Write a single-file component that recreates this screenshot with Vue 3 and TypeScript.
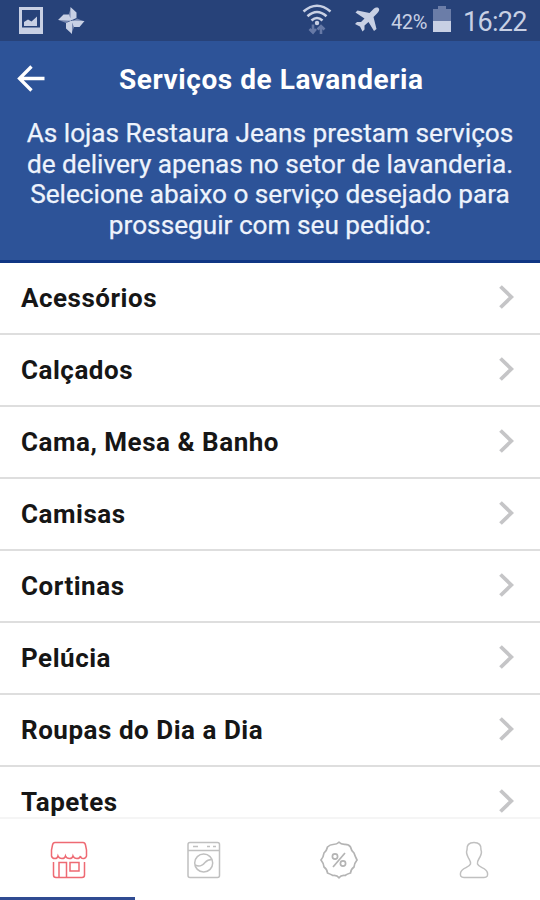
<script setup lang="ts">
interface Service {
  name: string
}

const intro: string[] = [
  'As lojas Restaura Jeans prestam serviços',
  'de delivery apenas no setor de lavanderia.',
  'Selecione abaixo o serviço desejado para',
  'prosseguir com seu pedido:',
]

const services: Service[] = [
  { name: 'Acessórios' },
  { name: 'Calçados' },
  { name: 'Cama, Mesa & Banho' },
  { name: 'Camisas' },
  { name: 'Cortinas' },
  { name: 'Pelúcia' },
  { name: 'Roupas do Dia a Dia' },
  { name: 'Tapetes' },
]
</script>

<template>
  <div class="screen">
    <div class="status">
      <svg class="photo" width="24" height="27" viewBox="0 0 24 27">
        <path fill-rule="evenodd" d="M0 0H24V27H0ZM3 3V20.500H21V3Z" />
        <path d="M5 19V15L9 12.500L12.500 14.500L18 9.500V19Z" />
      </svg>
      <svg class="pinwheel" width="27" height="27" viewBox="0 0 27 27">
        <path class="halo" d="M13 0.500V12.500L10.500 8ZM26.500 14.500H14.500L19 11.500ZM13.500 26.500V14.500L16.500 19ZM0.500 13H12.500L8 16Z" />
        <path d="M12.500 0L18.500 5.500V11L14 13H12.500ZM26.500 14L21.500 20H16L13.500 14.500V13.500ZM14 27L8 21.500V16L12.500 14H14ZM0 13L5.500 7.500H11L13 12.500V13.800Z" />
      </svg>
      <span class="gap"></span>
      <svg class="wifi" width="30" height="31" viewBox="0 0 30 31">
        <g class="arcs">
          <path d="M1.500 7.500Q15-4 28.500 7.500" />
          <path d="M5.500 12.200Q15 3.800 24.500 12.200" />
          <path d="M9.500 16.500Q15 11.500 20.500 16.500" />
        </g>
        <circle cx="15" cy="19" r="2.200" />
        <path class="traffic" d="M11 20.500V28M7.500 25L11 28.500L14 25M19 30V22M15.500 25.500L19 22L22.500 25.500" />
      </svg>
      <svg class="plane" width="25" height="25" viewBox="0 0 25 25">
        <path d="M23.500 1C25 2.500 24 4.500 22 6.500L18.500 10L21.500 22L19 24L13.500 15L9.500 18.500V22.500L7.500 24.500L5 19.500L0 17L2 15H6L9.500 11.500L0.500 5.500L2.500 3.500L14.500 6L18 2.500C20 0.500 22 0 23.500 1Z" />
      </svg>
      <span class="percent">42%</span>
      <svg class="battery" width="18" height="26" viewBox="0 0 18 26">
        <path class="empty" d="M5 0H13V3H18V15H0V3H5Z" />
        <path d="M0 15H18V26H0Z" />
      </svg>
      <span class="clock">16:22</span>
    </div>

    <header class="header">
      <div class="bar">
        <svg class="back" width="28" height="28" viewBox="0 0 28 28">
          <path d="M14.500 1.500L2.500 13.500L14.500 25.500M2.500 13.500H27.500" />
        </svg>
        <h1>Serviços de Lavanderia</h1>
      </div>
      <p class="intro">
        <span v-for="line in intro" :key="line">{{ line }}</span>
      </p>
    </header>

    <main class="list">
      <div v-for="service in services" :key="service.name" class="row">
        <span>{{ service.name }}</span>
        <svg class="chevron" width="15" height="24" viewBox="0 0 15 24">
          <path d="M1.500 1.500L12.300 12L1.500 22.500" />
        </svg>
      </div>
    </main>

    <nav class="tabs">
      <div class="tab active">
        <svg width="38" height="38" viewBox="0 0 38 38">
          <path d="M5 1.500H33Q35 1.500 35.500 4L36.500 9V15Q36 17 34 17.500Q31 18 30.500 15Q30 17.500 27 17.500T23 15Q22.500 17.500 19.500 17.500T15.500 15Q15 17.500 12 17.500T8 15Q7.500 17.500 5 17.500Q2 17.500 1.500 15V9L2.500 4Q3 1.500 5 1.500Z" />
          <path d="M3.500 21V34Q3.500 36.500 6 36.500H32Q34.500 36.500 34.500 34V21M9 36.500V21.500H16.500V36.500M20 21.500H29V30H20Z" />
        </svg>
      </div>
      <div class="tab">
        <svg width="38" height="38" viewBox="0 0 38 38">
          <rect x="3" y="1.500" width="31.500" height="35" rx="2" />
          <path d="M3 9.500H34.500M8 5.500H13M22 5.500H25M28 5.500H31" />
          <circle cx="18.700" cy="22" r="9" />
          <path d="M10 24C15 26.500 17.500 24.500 20 21.500S24.500 18.500 27 18.500" />
        </svg>
      </div>
      <div class="tab badge">
        <svg width="38" height="38" viewBox="0 0 38 38">
          <path d="M19 1.300Q21 3.500 25 3.300Q29 3.300 30.500 6Q31 9 34 12Q35 15 37 19Q34.500 22 34 26Q31 28 30.500 32Q27 33 25 34.500Q21 34 19 36.700Q17 34 13 34.500Q10 33 7.500 32Q7 28 4 26Q3.500 22 1 19Q3.500 16 4 12Q7 9 7.500 6Q10 3.500 13 3.500Q17 3.500 19 1.300Z" />
          <path d="M25 12L13 26" />
          <circle cx="15" cy="15.500" r="2.600" />
          <circle cx="23" cy="22.500" r="2.600" />
        </svg>
      </div>
      <div class="tab">
        <svg width="38" height="38" viewBox="0 0 38 38">
          <path d="M19 1.500C24 1.500 26.500 4 26 9C27 11 26 14 25 16C23.500 18.500 22 20 22.500 23C24 27 31.500 26.500 32.500 32C33 35 32 36.500 29 36.500H9C6 36.500 5 35 5.500 32C6.500 26.500 14 27 15.500 23C16 20 14 18.500 13 16C12 14 11 11 12 9C11.500 4 14 1.500 19 1.500Z" />
        </svg>
      </div>
    </nav>
  </div>
</template>

<style>
body {
  margin: 0;
  overflow: hidden;
}
</style>

<style scoped>
.screen {
  width: 540px;
  height: 900px;
  display: flex;
  flex-direction: column;
  overflow: hidden;
  background: #fff;
  font-family: Roboto, sans-serif;
}

svg {
  display: block;
  flex: none;
}

.status {
  flex: none;
  display: flex;
  align-items: flex-start;
  box-sizing: border-box;
  height: 41px;
  padding-left: 19px;
  background: #274279;
  color: #c8d0e4;
  fill: #c8d0e4;
}

.photo {
  margin-top: 7px;
}

.pinwheel {
  margin: 7px 0 0 15px;
}

.halo {
  fill: #7485ae;
}

.gap {
  flex: 1;
}

.wifi {
  margin: 4px 23px 0 0;
}

.arcs {
  fill: none;
  stroke: #c8d0e4;
  stroke-width: 2.6;
}

.traffic {
  fill: none;
  stroke: #6679a6;
  stroke-width: 2.6;
}

.plane {
  margin: 7px 11px 0 0;
}

.percent {
  width: 37px;
  margin: 10px 5px 0 0;
  font-size: 20px;
  line-height: 24px;
  letter-spacing: -0.4px;
}

.battery {
  margin-top: 6px;
}

.empty {
  fill: #6b7da8;
}

.clock {
  width: 77px;
  margin: 7px 0 0 12px;
  font-size: 27px;
  line-height: 30px;
  letter-spacing: -0.7px;
}

.header {
  flex: none;
  box-sizing: border-box;
  height: 222px;
  border-bottom: 3px solid #103684;
  background: #2d5398;
  color: #fff;
}

.bar {
  display: flex;
  align-items: center;
  height: 76px;
  padding-left: 17px;
}

.back {
  fill: none;
  stroke: #fff;
  stroke-width: 3.3;
}

h1 {
  margin: 2px 0 0 74px;
  font-size: 28px;
  font-weight: 700;
  line-height: 34px;
  letter-spacing: 0.56px;
  white-space: nowrap;
}

.intro {
  display: flex;
  flex-direction: column;
  align-items: center;
  margin: 1.4px 0 0;
  font-size: 26.2px;
  line-height: 30.4px;
  color: #eef3fc;
  -webkit-text-stroke: 0.25px #eef3fc;
  white-space: nowrap;
}

.list {
  flex: 1;
  min-height: 0;
  overflow: hidden;
}

.row {
  display: flex;
  align-items: center;
  justify-content: space-between;
  box-sizing: border-box;
  height: 72px;
  padding: 0 26px 0 21px;
  border-bottom: 2px solid #dedede;
  color: #161616;
  font-size: 26px;
  font-weight: 700;
  line-height: 30px;
  letter-spacing: 0.52px;
}

.chevron {
  margin-bottom: 3px;
  fill: none;
  stroke: #c5c5c7;
  stroke-width: 3.8;
}

.tabs {
  flex: none;
  display: flex;
  box-sizing: border-box;
  height: 83px;
  border-top: 2px solid #f5f5f5;
}

.tab {
  flex: 1;
  display: flex;
  justify-content: center;
  padding: 22px 0 0 3px;
  border-bottom: 3px solid transparent;
  fill: none;
  stroke: #c0c0c0;
  stroke-width: 1.5;
}

.tab.active {
  border-bottom-color: #304b92;
  stroke: #ee6a73;
}

.tab.badge {
  stroke: #b4b4b4;
  stroke-width: 1.7;
}
</style>
